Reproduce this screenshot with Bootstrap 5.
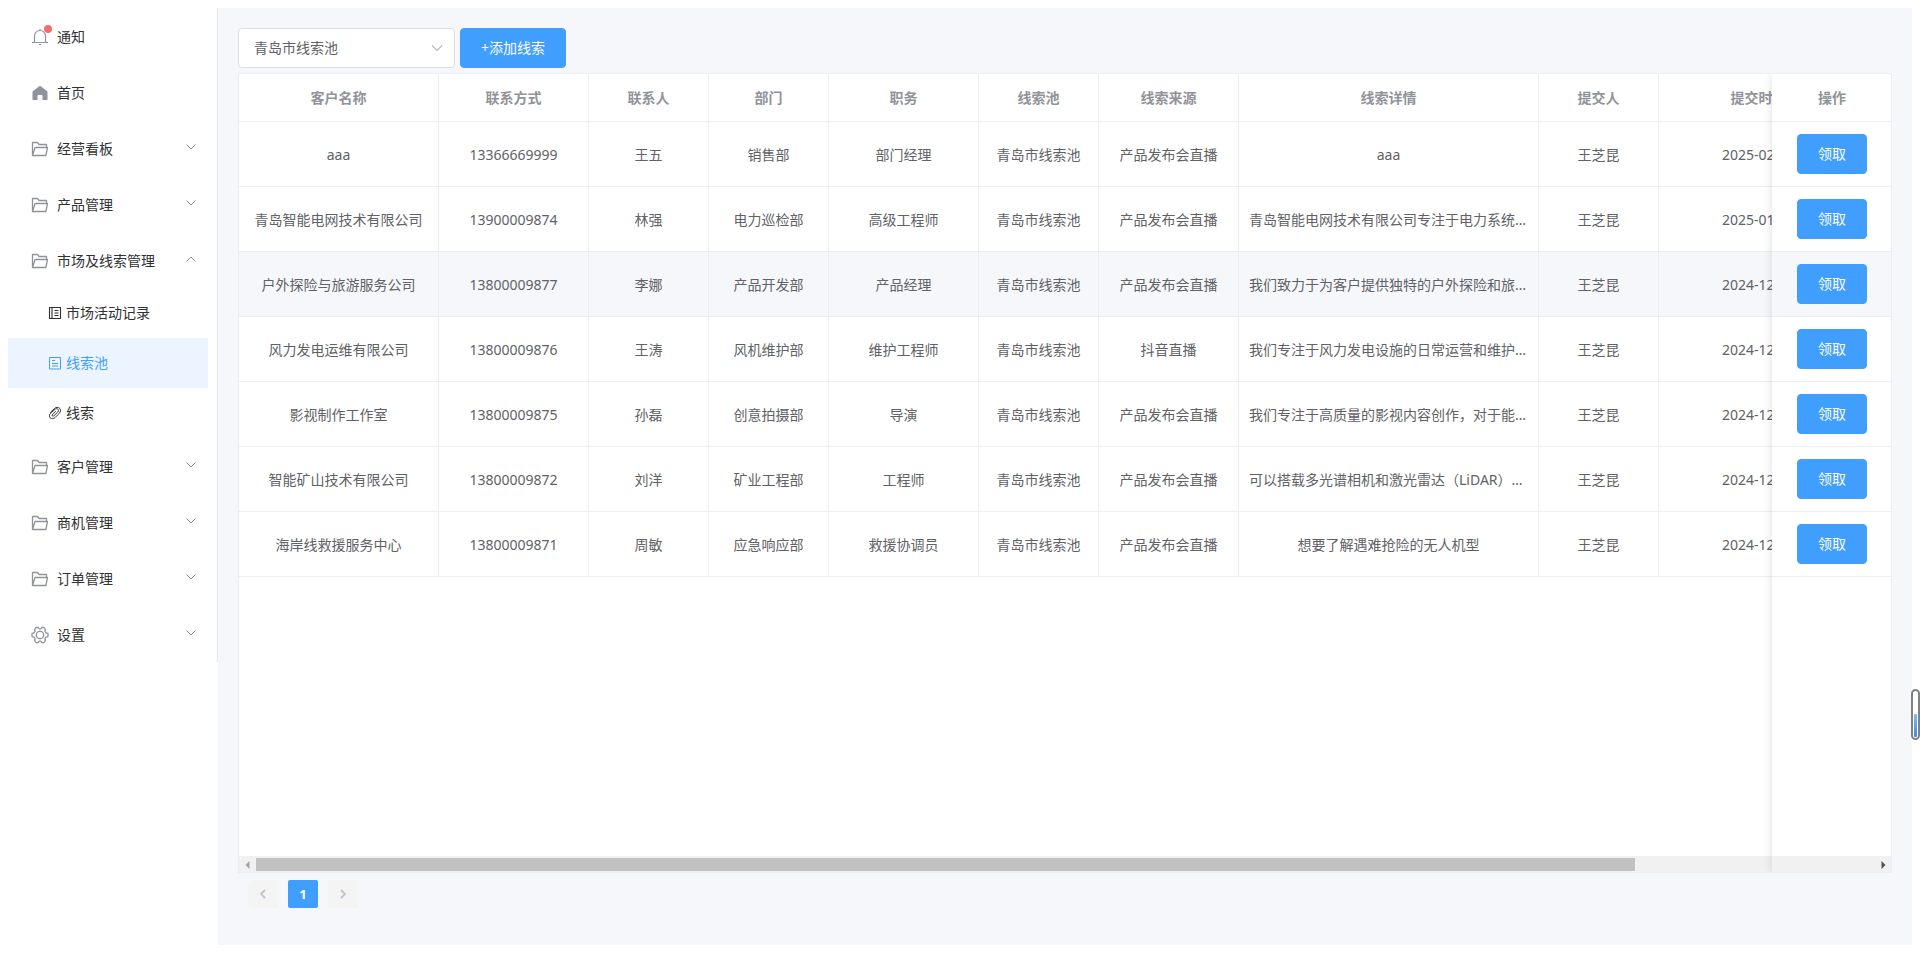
<!DOCTYPE html>
<html lang="zh-CN">
<head>
<meta charset="utf-8">
<meta name="viewport" content="width=device-width, initial-scale=1">
<title>线索池</title>
<link href="https://cdn.jsdelivr.net/npm/bootstrap@5.3.0/dist/css/bootstrap.min.css" rel="stylesheet">
<style>
:root{--ep-blue:#409eff;--ep-line:#ebeef5;--ep-muted:#909399;--ep-text:#606266;--ep-dark:#303133}
body{font-family:"Noto Sans","Noto Sans CJK SC",sans-serif;font-size:14px;line-height:24px;color:var(--ep-text);background:#fff}
.side{width:210px;border-right:1px solid #e6e6e6}
.side a{color:var(--ep-dark);height:56px}
.side a.top-item{padding:2px 20px 0}
.side a.sub-item{height:50px;width:200px;padding:0 40px}
.side a.active{background:#ecf5ff;color:var(--ep-blue)}
.ico-box{width:24px;height:24px;margin-right:5px;color:var(--ep-muted)}
.arrow-mark{color:var(--ep-muted);margin-bottom:4px}
.arrow-open{transform:rotate(180deg)}
.notice-dot{width:8px;height:8px;background:#f56c6c;top:0;right:0}
.main-pane{background:#f5f7fb;padding:20px;min-width:0}
.tool-row{gap:5px}
.pool-select{width:217px;height:40px;padding:0 30px 2px 15px;font-size:14px;color:var(--ep-text);border-color:#dcdfe6;border-radius:4px;
 background-image:url("data:image/svg+xml,%3Csvg xmlns='http://www.w3.org/2000/svg' viewBox='0 0 14 14' fill='none' stroke='%23b4b8bf' stroke-width='1.1'%3E%3Cpath d='M2 4.5l5 5 5-5'/%3E%3C/svg%3E");background-size:14px 14px;background-position:right 10px center}
.btn-ep{--bs-btn-color:#fff;--bs-btn-bg:var(--ep-blue);--bs-btn-border-color:var(--ep-blue);--bs-btn-hover-color:#fff;--bs-btn-hover-bg:#66b1ff;--bs-btn-hover-border-color:#66b1ff;--bs-btn-font-size:14px;--bs-btn-border-radius:4px;height:40px;padding:0 20px;line-height:24px}
.grid-box{background:#fff;border:solid var(--ep-line);border-width:1px 0 1px 1px;margin-top:5px}
.leads{table-layout:fixed;width:1740px;border-collapse:separate;border-spacing:0}
.leads th,.leads td{text-align:center;padding:0 10px;border:solid var(--ep-line);border-width:0 1px 1px 0;white-space:nowrap;overflow:hidden;text-overflow:ellipsis}
.leads th{height:48px;color:var(--ep-muted);font-weight:700}
.leads td{height:65px;padding-top:2px}
.leads tr>*{background:#fff}
.leads tr.hovered>*{background:#f5f7fa}
.leads tr>:last-child{position:sticky;right:0;border-right:0;padding-top:0}
.pin-shade{width:120px;border-right:1px solid var(--ep-line);box-shadow:0 0 10px rgba(0,0,0,.12);pointer-events:none}
.hbar{height:16px;background:#f1f1f1;padding:2px 0 1px}
.hbar span{width:17px}
.hbar-thumb{background:#c1c1c1;width:85.2%}
.pager{gap:10px;margin:7px 10px 17px}
.pager .page-link,.pager .page-item:not(:first-child) .page-link{width:30px;height:28px;margin:0;padding:0;border:0;border-radius:2px;background:#f4f4f5;color:#c0c4cc;font-size:13px;font-weight:700;line-height:28px}
.pager .page-item.active .page-link{background:var(--ep-blue);color:#fff}
.edge-gauge{width:9px;height:51px;top:689px;right:0;border:2px solid #808080;border-radius:5px;background:#fff;padding:1px}
.edge-gauge div{height:23px;border-radius:1px;background:linear-gradient(#7cc0f0,#3f86e8)}
</style>
</head>
<body>
<svg class="d-none" aria-hidden="true">
 <symbol id="folder" viewBox="0 0 18 18"><path d="M1.500 15.500V2.500h5l1.600 2h7.400v3M1.500 15.500L4 7.500h12.500l-1.600 8z" fill="none" stroke="currentColor" stroke-width="1.300" stroke-linejoin="round"/></symbol>
 <symbol id="down" viewBox="0 0 12 12"><path d="M1.500 3.500L6 8l4.500-4.500" fill="none" stroke="currentColor"/></symbol>
</svg>
<div class="d-flex min-vh-100 p-2">
 <aside class="flex-shrink-0">
  <nav class="side d-flex flex-column" id="side"></nav>
 </aside>
 <main class="main-pane flex-grow-1 d-flex flex-column">
  <div class="d-flex tool-row">
   <select class="form-select pool-select" aria-label="线索池"><option>青岛市线索池</option></select>
   <button type="button" class="btn btn-ep">+添加线索</button>
  </div>
  <div class="grid-box position-relative flex-grow-1 d-flex flex-column overflow-hidden">
   <div class="flex-grow-1 overflow-hidden">
    <table class="leads">
     <colgroup id="cols"></colgroup>
     <thead><tr id="head"></tr></thead>
     <tbody id="rows"></tbody>
    </table>
   </div>
   <div class="hbar d-flex">
    <span class="d-flex align-items-center justify-content-center"><svg width="5" height="8" viewBox="0 0 5 8"><path d="M4.500 0v8L.5 4z" fill="#a3a3a3"/></svg></span>
    <div class="flex-grow-1 d-flex"><div class="hbar-thumb"></div></div>
    <span class="d-flex align-items-center justify-content-center"><svg width="5" height="8" viewBox="0 0 5 8"><path d="M.5 0v8l4-4z" fill="#505050"/></svg></span>
   </div>
   <div class="pin-shade position-absolute top-0 bottom-0 end-0"></div>
  </div>
  <ul class="pagination pager">
   <li class="page-item"><button class="page-link d-flex align-items-center justify-content-center" aria-label="上一页"><svg width="12" height="12" viewBox="0 0 12 12"><path d="M8 2L4 6l4 4" fill="none" stroke="currentColor" stroke-width="1.800"/></svg></button></li>
   <li class="page-item active"><button class="page-link">1</button></li>
   <li class="page-item"><button class="page-link d-flex align-items-center justify-content-center" aria-label="下一页"><svg width="12" height="12" viewBox="0 0 12 12"><path d="M4 2l4 4-4 4" fill="none" stroke="currentColor" stroke-width="1.800"/></svg></button></li>
  </ul>
 </main>
</div>
<div class="edge-gauge position-fixed d-flex flex-column justify-content-end"><div></div></div>
<script>
const folder='<svg width="18" height="18"><use href="#folder"/></svg>';
const bell='<svg width="18" height="18" viewBox="0 0 18 18" fill="none" stroke="currentColor" stroke-width="1.200"><path d="M1 14.500h16M3.500 14.500V8a5.500 5.500 0 0 1 11 0v6.500M9 2.500V1M7.800 16.500h2.400"/></svg><i class="notice-dot rounded-circle position-absolute"></i>';
const home='<svg width="18" height="18" viewBox="0 0 18 18" fill="currentColor"><path d="M1.500 7.500L8.300 2.200a1.100 1.100 0 0 1 1.400 0L16.500 7.500V16H11.500V12a1 1 0 0 0-1-1h-3a1 1 0 0 0-1 1v4H1.500z"/></svg>';
const gear='<svg width="18" height="18" viewBox="0 0 18 18" fill="none" stroke="currentColor" stroke-width="1.300"><path d="M5 1.500 7.200 1.300 8 2.800h2l.8-1.500 2.200.2 1.500 2.300L13.900 5.200l1 1.700 2.100.4v3.400l-2.100.4-1 1.700.6 1.400-1.500 2.300-2.200.2-.8-1.500H8l-.8 1.500-2.200-.2-1.500-2.300.6-1.400-1-1.700-2.100-.4V7.300l2.100-.4 1-1.700-.6-1.400z" stroke-linejoin="round"/><circle cx="9" cy="9" r="3.700"/></svg>';
const book='<svg width="14" height="14" viewBox="0 0 14 14" fill="none" stroke="currentColor" stroke-width="1.100"><path d="M1.500 1.500h11v11h-11zM4 1.500v11M6.500 4.500h4M6.500 7h4M6.500 9.500h4"/></svg>';
const doc='<svg width="14" height="14" viewBox="0 0 14 14" fill="none" stroke="currentColor"><path d="M1.500 1.500h11v11.500h-11zM4 4.500h3M4 7.500h6M4 10h6"/></svg>';
const clip='<svg width="14" height="14" viewBox="0 0 14 14" fill="none" stroke="currentColor"><path d="M2.200 6.500 6.500 2.500C8 1 10.500 1 11.700 2.300s1 3.600-.4 5L7 11.600C5.500 13 3.300 13 2.200 11.800s-1-2.800 0-4.200l4.900-4.400c.9-.8 2.200-.7 2.900.1s.6 1.800-.2 2.700L5.900 9.800c-.5.5-1.200.5-1.600.1s-.4-1 .1-1.500L7.800 5.200"/></svg>';
const menu=[[bell,'通知'],[home,'首页'],[folder,'经营看板',1],[folder,'产品管理',1],[folder,'市场及线索管理',2],[book,'市场活动记录',3],[doc,'线索池',4],[clip,'线索',3],[folder,'客户管理',1],[folder,'商机管理',1],[folder,'订单管理',1],[gear,'设置',1]];
document.getElementById('side').innerHTML=menu.map(([ic,t,k])=>k>2
 ?`<a href="#" class="sub-item d-flex align-items-center gap-1 text-decoration-none${k==4?' active':''}">${ic}<span>${t}</span></a>`
 :`<a href="#" class="top-item d-flex align-items-center text-decoration-none"><span class="ico-box position-relative d-flex align-items-center justify-content-center">${ic}</span><span class="flex-grow-1">${t}</span>${k?`<svg class="arrow-mark${k==2?' arrow-open':''}" width="12" height="12"><use href="#down"/></svg>`:''}</a>`).join('');
const cols=[['客户名称',200],['联系方式',150],['联系人',120],['部门',120],['职务',150],['线索池',120],['线索来源',140],['线索详情',300],['提交人',120],['提交时间',200],['操作',120]];
document.getElementById('cols').innerHTML=cols.map(c=>`<col style="width:${c[1]}px">`).join('');
document.getElementById('head').innerHTML=cols.map(c=>`<th scope="col">${c[0]}</th>`).join('');
const P='青岛市线索池',S='产品发布会直播',W='王芝昆';
const rows=[
['aaa','13366669999','王五','销售部','部门经理',P,S,'aaa',W,'2025-02-10'],
['青岛智能电网技术有限公司','13900009874','林强','电力巡检部','高级工程师',P,S,'青岛智能电网技术有限公司专注于电力系统的智能化',W,'2025-01-10'],
['户外探险与旅游服务公司','13800009877','李娜','产品开发部','产品经理',P,S,'我们致力于为客户提供独特的户外探险和旅游服务',W,'2024-12-10'],
['风力发电运维有限公司','13800009876','王涛','风机维护部','维护工程师',P,'抖音直播','我们专注于风力发电设施的日常运营和维护工作',W,'2024-12-10'],
['影视制作工作室','13800009875','孙磊','创意拍摄部','导演',P,S,'我们专注于高质量的影视内容创作，对于能够航拍',W,'2024-12-10'],
['智能矿山技术有限公司','13800009872','刘洋','矿业工程部','工程师',P,S,'可以搭载多光谱相机和激光雷达（LiDAR）的无人机',W,'2024-12-10'],
['海岸线救援服务中心','13800009871','周敏','应急响应部','救援协调员',P,S,'想要了解遇难抢险的无人机型',W,'2024-12-10']];
document.getElementById('rows').innerHTML=rows.map((r,i)=>`<tr${i==2?' class="hovered"':''}>${r.map(c=>`<td>${c}</td>`).join('')}<td><button type="button" class="btn btn-ep">领取</button></td></tr>`).join('');
</script>
<script src="https://cdn.jsdelivr.net/npm/bootstrap@5.3.0/dist/js/bootstrap.bundle.min.js"></script>
</body>
</html>
